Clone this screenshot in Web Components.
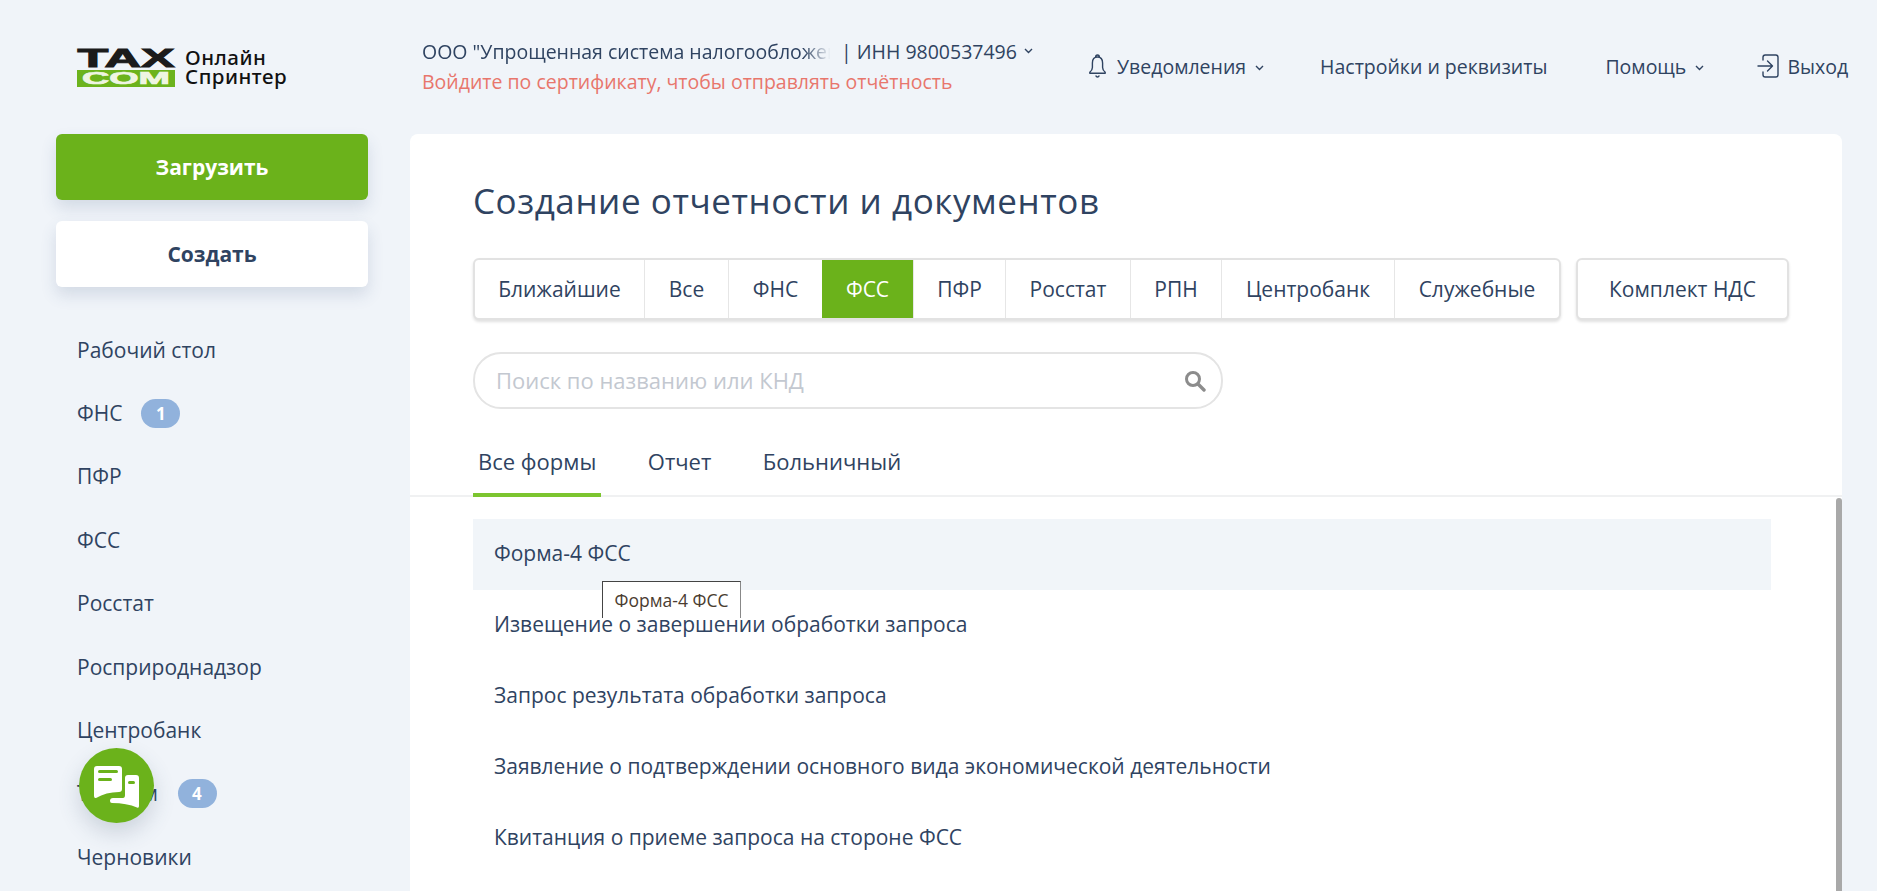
<!DOCTYPE html>
<html lang="ru"><head><meta charset="utf-8"><title>Онлайн Спринтер</title>
<style>
html,body{margin:0;height:891px;overflow:hidden}
body{background:#f0f4f9;font-family:"Open Sans",sans-serif;color:#2f4361}
</style></head>
<body>
<app-shell>
  <tax-header slot="header"></tax-header>
  <side-bar slot="side">
    <nav-item>Рабочий стол</nav-item>
    <nav-item badge="1">ФНС</nav-item>
    <nav-item>ПФР</nav-item>
    <nav-item>ФСС</nav-item>
    <nav-item>Росстат</nav-item>
    <nav-item>Росприроднадзор</nav-item>
    <nav-item>Центробанк</nav-item>
    <nav-item badge="4" style="letter-spacing:1px">Тандем</nav-item>
    <nav-item>Черновики</nav-item>
  </side-bar>
  <main-card slot="main"></main-card>
</app-shell>
<chat-fab></chat-fab>
<script>
function def(name,css,html){
  customElements.define(name,class extends HTMLElement{
    constructor(){super();const s=this.attachShadow({mode:'open'});s.innerHTML='<style>'+css+'</style>'+(typeof html==='function'?html(this):html);}
  });
}
const chev='<svg width="9" height="6" viewBox="0 0 9 6" fill="none" stroke="currentColor" stroke-width="1.4"><path d="M1 1l3.5 3.5L8 1"/></svg>';

def('app-shell',`:host{display:grid;grid-template-columns:410px 1432px;grid-template-rows:134px 757px;height:891px;overflow:hidden}
 ::slotted([slot=header]){grid-column:1/3}`,
 `<slot name="header"></slot><slot name="side"></slot><slot name="main"></slot>`);

def('tax-logo',`:host{display:flex;flex:none;align-items:center;gap:10px;width:345px;padding-left:77px}
 .mark{width:98px;height:39px;display:block;overflow:visible}
 .txt{font:500 20.5px/19.5px "Noto Sans","Open Sans",sans-serif;color:#111;letter-spacing:.5px}`,
 `<svg class="mark" viewBox="0 0 98 39">
   <text x="49" y="19" text-anchor="middle" textLength="97" lengthAdjust="spacingAndGlyphs" font-family="Liberation Sans" font-weight="700" font-size="26" fill="#1b1b1b" stroke="#1b1b1b" stroke-width="1">TAX</text>
   <rect x="0" y="22" width="98" height="17" fill="#6cb31d"/>
   <text x="49" y="36" text-anchor="middle" textLength="88" lengthAdjust="spacingAndGlyphs" font-family="Liberation Sans" font-weight="700" font-size="17" fill="#eef5e2" stroke="#eef5e2" stroke-width=".7">COM</text>
 </svg><div class="txt">Онлайн<br>Спринтер</div>`);

def('org-info',`:host{display:block;flex:none;width:658px;font-size:19.5px;line-height:30px}
 .top{display:flex;align-items:center;white-space:nowrap}
 .name{width:419px;overflow:hidden;white-space:nowrap;-webkit-mask-image:linear-gradient(90deg,#000 91%,transparent 97.5%);mask-image:linear-gradient(90deg,#000 91%,transparent 97.5%)}
 svg{margin-left:7px;margin-top:-2px}
 .warn{color:#e8766c;white-space:nowrap}`,
 `<div class="top"><span class="name">ООО "Упрощенная система налогообложен</span><span>| ИНН 9800537496</span>${chev}</div><div class="warn">Войдите по сертификату, чтобы отправлять отчётность</div>`);

def('head-link',`:host{display:flex;flex:none;align-items:center;font-size:19.5px;color:#2f4361;white-space:nowrap}
 ::slotted(svg){margin-right:9px}
 .c{margin-left:9px;display:none;margin-top:3px}:host([menu]) .c{display:flex}`,
 `<slot name="icon"></slot><slot></slot><span class="c">${chev}</span>`);

def('tax-header',`:host{display:flex;align-items:center;height:134px}
 .links{display:flex;flex:none;align-items:center;margin:0 0 2px 7px}
 head-link:nth-child(2){margin-left:56px}
 head-link:nth-child(3){margin-left:58px}
 head-link:nth-child(4){margin-left:53px}`,
 `<tax-logo></tax-logo>
  <org-info></org-info>
  <div class="links">
   <head-link menu><svg slot="icon" width="21" height="26" viewBox="0 0 21 26" fill="none" stroke="#2f4361" stroke-width="1.4" stroke-linejoin="round"><path d="M8.6 4.2C8.6 2.8 9.3 2 10.5 2s1.9.8 1.9 2.2M10.5 4c3.6 0 5.1 2.7 5.1 6v4.5c0 2.3 1.2 3.6 2.6 4.7v1H2.8v-1c1.4-1.1 2.6-2.4 2.6-4.7V10c0-3.3 1.5-6 5.1-6z"/><path d="M8.7 22.5c.4 1 1 1.5 1.8 1.5s1.4-.5 1.8-1.5"/></svg>Уведомления</head-link>
   <head-link>Настройки и реквизиты</head-link>
   <head-link menu>Помощь</head-link>
   <head-link><svg slot="icon" style="margin-right:6px" width="24" height="26" viewBox="0 0 24 26" fill="none" stroke="#2f4361" stroke-width="1.4" stroke-linejoin="round" stroke-linecap="round"><path d="M6 7V4.2C6 3 7 2 8.2 2h10.6C20 2 21 3 21 4.2v17.6c0 1.2-1 2.2-2.2 2.2H8.2C7 24 6 23 6 21.800V19"/><path d="M1 13h14.5M10.5 8l5 5-5 5"/></svg>Выход</head-link>
  </div>`);

def('big-btn',`:host{display:flex;align-items:center;justify-content:center;width:312px;height:66px;border-radius:6px;font-size:21px;font-weight:700;background:#fff;color:#2f4361;box-shadow:0 8px 16px rgba(60,90,130,.16)}
 :host([primary]){background:#6bb21b;color:#fff}`,`<slot></slot>`);

def('side-bar',`:host{display:block;padding-left:56px}
 big-btn+big-btn{margin-top:21px}
 .nav{margin-top:31px}`,
 `<big-btn primary>Загрузить</big-btn><big-btn>Создать</big-btn><div class="nav"><slot></slot></div>`);

def('nav-item',`:host{display:flex;align-items:center;height:63.4px;padding-left:21px;font-size:21px;color:#2f4361;white-space:nowrap}
 .b{display:flex;align-items:center;justify-content:center;width:39px;height:29px;border-radius:15px;background:#91b2dc;color:#fff;font-weight:700;font-size:17px;margin-left:19px}`,
 el=>`<slot></slot>${el.hasAttribute('badge')?`<span class="b">${el.getAttribute('badge')}</span>`:''}`);

def('seg-tabs',`:host{display:flex;height:62px;box-sizing:border-box;border:2px solid #e2e2e2;border-radius:6px;background:#fff;box-shadow:0 2px 3px rgba(0,0,0,.12)}`,`<slot></slot>`);
def('seg-tab',`:host{display:flex;align-items:center;justify-content:center;box-sizing:border-box;font-size:21px;color:#2f4361;border-left:1px solid #e6e6e6;white-space:nowrap}
 :host(:first-child){border-left:0}
 :host([active]){background:#6bb21b;color:#fff;border-left:0}`,`<slot></slot>`);

def('search-box',`:host{display:flex;align-items:center;justify-content:space-between;width:750px;height:57px;box-sizing:border-box;border:2px solid #e4e4e4;border-radius:28px;padding:0 15px 2px 21px;font-size:22px;color:#c3c8d0;background:#fff}
 svg{margin-top:2px}`,
 `<span>Поиск по названию или КНД</span><svg width="22" height="22" viewBox="0 0 22 22" fill="none" stroke="#8c8c8c"><circle cx="9" cy="9" r="6.5" stroke-width="3"/><path d="M14 14l6 6" stroke-width="3.4" stroke-linecap="round"/></svg>`);

def('sub-tabs',`:host{display:flex;height:62px;box-sizing:border-box;padding-left:63px;border-bottom:2px solid #f0f1f2}
 div{display:flex;align-items:center;height:60px;box-sizing:border-box;padding:0 5px 8px;margin-right:41.5px;font-size:22px;color:#2f4361;white-space:nowrap}
 .on{height:62px;padding-bottom:6px;border-bottom:4px solid #7cc52f}`,
 `<div class="on">Все формы</div><div>Отчет</div><div>Больничный</div>`);

def('form-row',`:host{display:flex;align-items:center;height:71px;box-sizing:border-box;padding:0 0 3px 21px;font-size:21px;color:#2f4361;white-space:nowrap}
 :host([hl]){background:#f1f5f9}`,`<slot></slot>`);

def('form-tip',`:host{position:absolute;left:129px;top:62px;width:139px;height:37px;box-sizing:border-box;background:#fff;border:1px solid #444;border-right-color:#888;border-bottom:0;display:flex;align-items:center;justify-content:center;font-size:17.5px;color:#4a3c30;white-space:nowrap}`,`<slot></slot>`);

def('main-card',`:host{display:block;position:relative;background:#fff;border-radius:8px 8px 0 0;height:757px;overflow:hidden}
 h1{margin:0;padding:44px 0 0 63px;font-size:35px;font-weight:400;line-height:46px;color:#2f4361;letter-spacing:.56px}
 .bar{display:flex;gap:15px;margin:34px 0 0 63px}
 search-box{margin:32px 0 0 63px}
 sub-tabs{margin-top:26px}
 .list{position:relative;margin:22px 0 0 63px;width:1298px}
 .sb{position:absolute;right:0;top:364px;bottom:0;width:6px;background:#a9a9a9;border-radius:3px 3px 0 0}`,
 `<h1>Создание отчетности и документов</h1>
  <div class="bar">
   <seg-tabs>
    <seg-tab style="width:169px">Ближайшие</seg-tab><seg-tab style="width:84px">Все</seg-tab><seg-tab style="width:94px">ФНС</seg-tab><seg-tab active style="width:91px">ФСС</seg-tab><seg-tab style="width:92px">ПФР</seg-tab><seg-tab style="width:125px">Росстат</seg-tab><seg-tab style="width:91px">РПН</seg-tab><seg-tab style="width:173px">Центробанк</seg-tab><seg-tab style="width:165px">Служебные</seg-tab>
   </seg-tabs>
   <seg-tabs><seg-tab style="width:209px">Комплект НДС</seg-tab></seg-tabs>
  </div>
  <search-box></search-box>
  <sub-tabs></sub-tabs>
  <div class="list">
   <form-row hl>Форма-4 ФСС</form-row>
   <form-row>Извещение о завершении обработки запроса</form-row>
   <form-row>Запрос результата обработки запроса</form-row>
   <form-row>Заявление о подтверждении основного вида экономической деятельности</form-row>
   <form-row>Квитанция о приеме запроса на стороне ФСС</form-row>
   <form-tip>Форма-4 ФСС</form-tip>
  </div>
  <div class="sb"></div>`);

def('chat-fab',`:host{position:fixed;left:79px;top:748px;width:75px;height:75px;border-radius:50%;background:#6bb21b;box-shadow:0 10px 22px rgba(60,80,110,.2);display:flex;align-items:center;justify-content:center}`,
 `<svg width="45" height="42" viewBox="0 0 45 42" style="margin-top:3px;margin-left:-1px"><path d="M3 0H25Q28 0 28 3V23Q28 26 25 26Q12 26 2 32Q0 32.5 0 30V3Q0 0 3 0Z" fill="#fff"/><rect x="4" y="4" width="20" height="3" rx="1.5" fill="#6bb21b"/><rect x="4" y="12" width="14" height="3" rx="1.5" fill="#6bb21b"/><path d="M34 9H42Q45 9 45 12V40Q45 42.5 43 41.5Q33 37 18 37Q16 37 16 35Q16 32 19 32H29Q31 32 31 29V12Q31 9 34 9Z" fill="#fff"/><rect x="34" y="15" width="7" height="3" rx="1.5" fill="#6bb21b"/></svg>`);
</script>
</body></html>
